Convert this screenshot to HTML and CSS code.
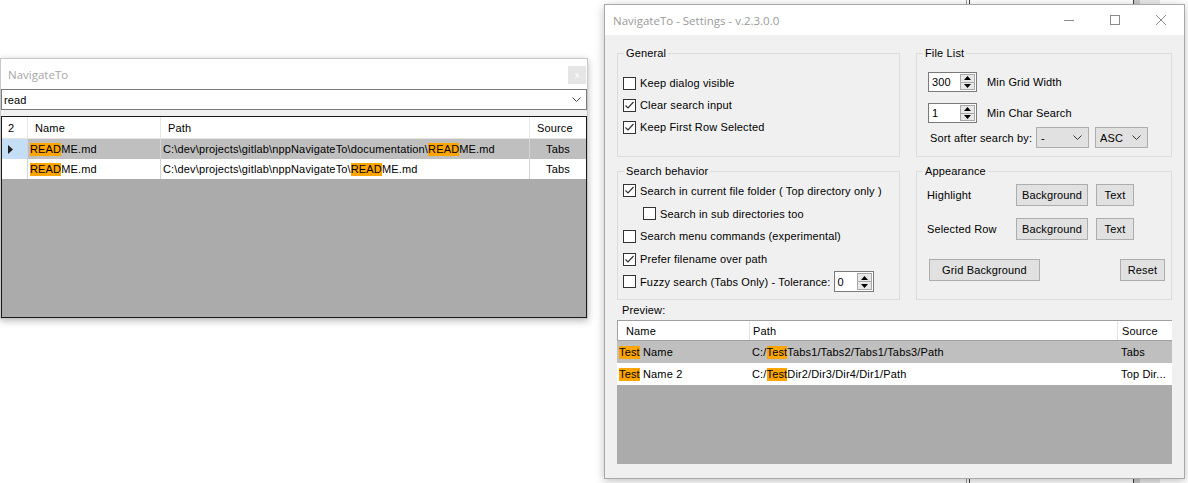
FILE: index.html
```html
<!DOCTYPE html>
<html>
<head>
<meta charset="utf-8">
<link rel="stylesheet" href="styles.css">
</head>
<body>
<div class="bgwin"></div>

<div class="win nav">
  <div class="nav-title">
    <span>NavigateTo</span>
    <span class="nav-close">x</span>
  </div>
  <div class="nav-combo">
    <span>read</span>
    <svg class="chev" width="9" height="5" viewBox="0 0 9 5"><path d="M0.5 0.5L4.5 4.5L8.5 0.5" fill="none" stroke="#444" stroke-width="1"/></svg>
  </div>
  <div class="nav-grid">
    <div class="nrow nhead">
      <div class="nc rh">2</div>
      <div class="nc">Name</div>
      <div class="nc">Path</div>
      <div class="nc">Source</div>
    </div>
    <div class="nrow nsel">
      <div class="nc rh rh-sel"><svg width="5" height="9" viewBox="0 0 5 9"><path d="M0 0L5 4.5L0 9z" fill="#222"/></svg></div>
      <div class="nc"><span class="hl">READ</span>ME.md</div>
      <div class="nc">C:\dev\projects\gitlab\nppNavigateTo\documentation\<span class="hl">READ</span>ME.md</div>
      <div class="nc center">Tabs</div>
    </div>
    <div class="nrow">
      <div class="nc rh"></div>
      <div class="nc"><span class="hl">READ</span>ME.md</div>
      <div class="nc">C:\dev\projects\gitlab\nppNavigateTo\<span class="hl">READ</span>ME.md</div>
      <div class="nc center">Tabs</div>
    </div>
  </div>
</div>

<div class="win settings">
  <div class="s-title">
    <span class="s-title-text">NavigateTo - Settings - v.2.3.0.0</span>
    <div class="caps">
      <span class="cap"><svg width="10" height="1" viewBox="0 0 10 1"><rect width="10" height="1" fill="#8c8c8c"/></svg></span>
      <span class="cap"><svg width="10" height="10" viewBox="0 0 10 10"><rect x="0.5" y="0.5" width="9" height="9" fill="none" stroke="#8c8c8c"/></svg></span>
      <span class="cap"><svg width="10" height="10" viewBox="0 0 10 10"><path d="M0 0L10 10M10 0L0 10" stroke="#8c8c8c" stroke-width="1"/></svg></span>
    </div>
  </div>
  <div class="s-body">
    <div class="groups">
      <fieldset class="grp">
        <legend>General</legend>
        <div class="gbody gb-general">
          <div class="chk-row"><span class="cb"></span><span>Keep dialog visible</span></div>
          <div class="chk-row"><span class="cb"><svg width="11" height="11" viewBox="0 0 11 11"><polyline points="1.5,5.5 4,8 9.5,2" fill="none" stroke="#333" stroke-width="1.2"/></svg></span><span>Clear search input</span></div>
          <div class="chk-row"><span class="cb"><svg width="11" height="11" viewBox="0 0 11 11"><polyline points="1.5,5.5 4,8 9.5,2" fill="none" stroke="#333" stroke-width="1.2"/></svg></span><span>Keep First Row Selected</span></div>
        </div>
      </fieldset>

      <fieldset class="grp">
        <legend>File List</legend>
        <div class="gbody gb-files">
          <div class="fl-row r1">
            <div class="spin w49"><span class="spin-val">300</span><span class="spin-btns"><span class="sb"><svg width="7" height="4" viewBox="0 0 7 4"><path d="M0 4L3.5 0L7 4z" fill="#000"/></svg></span><span class="sb"><svg width="7" height="4" viewBox="0 0 7 4"><path d="M0 0L3.5 4L7 0z" fill="#000"/></svg></span></span></div>
            <span class="fl-label">Min Grid Width</span>
          </div>
          <div class="fl-row r2">
            <div class="spin w49"><span class="spin-val">1</span><span class="spin-btns"><span class="sb"><svg width="7" height="4" viewBox="0 0 7 4"><path d="M0 4L3.5 0L7 4z" fill="#000"/></svg></span><span class="sb"><svg width="7" height="4" viewBox="0 0 7 4"><path d="M0 0L3.5 4L7 0z" fill="#000"/></svg></span></span></div>
            <span class="fl-label">Min Char Search</span>
          </div>
          <div class="sort-row">
            <span class="sort-label">Sort after search by:</span>
            <div class="dd"><span>-</span><svg width="9" height="5" viewBox="0 0 9 5"><path d="M0.5 0.5L4.5 4.5L8.5 0.5" fill="none" stroke="#333"/></svg></div>
            <div class="dd"><span>ASC</span><svg width="9" height="5" viewBox="0 0 9 5"><path d="M0.5 0.5L4.5 4.5L8.5 0.5" fill="none" stroke="#333"/></svg></div>
          </div>
        </div>
      </fieldset>

      <fieldset class="grp">
        <legend>Search behavior</legend>
        <div class="gbody gb-search">
          <div class="chk-row s"><span class="cb"><svg width="11" height="11" viewBox="0 0 11 11"><polyline points="1.5,5.5 4,8 9.5,2" fill="none" stroke="#333" stroke-width="1.2"/></svg></span><span>Search in current file folder ( Top directory only )</span></div>
          <div class="chk-row s sub"><span class="cb"></span><span>Search in sub directories too</span></div>
          <div class="chk-row s"><span class="cb"></span><span>Search menu commands (experimental)</span></div>
          <div class="chk-row s"><span class="cb"><svg width="11" height="11" viewBox="0 0 11 11"><polyline points="1.5,5.5 4,8 9.5,2" fill="none" stroke="#333" stroke-width="1.2"/></svg></span><span>Prefer filename over path</span></div>
          <div class="chk-row s fuzzy"><span class="cb"></span><span>Fuzzy search (Tabs Only) - Tolerance:</span>
            <div class="spin w40"><span class="spin-val">0</span><span class="spin-btns"><span class="sb"><svg width="7" height="4" viewBox="0 0 7 4"><path d="M0 4L3.5 0L7 4z" fill="#000"/></svg></span><span class="sb"><svg width="7" height="4" viewBox="0 0 7 4"><path d="M0 0L3.5 4L7 0z" fill="#000"/></svg></span></span></div>
          </div>
        </div>
      </fieldset>

      <fieldset class="grp">
        <legend>Appearance</legend>
        <div class="gbody gb-appear">
          <div class="ap-row">
            <span class="ap-label">Highlight</span>
            <span class="btn b-bg">Background</span>
            <span class="btn b-tx">Text</span>
          </div>
          <div class="ap-row r2">
            <span class="ap-label">Selected Row</span>
            <span class="btn b-bg">Background</span>
            <span class="btn b-tx">Text</span>
          </div>
          <div class="ap-row r3">
            <span class="btn b-grid">Grid Background</span>
            <span class="btn b-reset">Reset</span>
          </div>
        </div>
      </fieldset>
    </div>

    <div class="preview-label">Preview:</div>
    <div class="pgrid">
      <div class="prow phead">
        <div class="pc ph1">Name</div>
        <div class="pc ph2">Path</div>
        <div class="pc ph3">Source</div>
      </div>
      <div class="prow psel">
        <div class="pc"><span class="hl">Test</span> Name</div>
        <div class="pc">C:/<span class="hl">Test</span>Tabs1/Tabs2/Tabs1/Tabs3/Path</div>
        <div class="pc">Tabs</div>
      </div>
      <div class="prow pwhite">
        <div class="pc"><span class="hl">Test</span> Name 2</div>
        <div class="pc">C:/<span class="hl">Test</span>Dir2/Dir3/Dir4/Dir1/Path</div>
        <div class="pc">Top Dir...</div>
      </div>
    </div>
  </div>
</div>
</body>
</html>
```

FILE: styles.css
```css
* { box-sizing: border-box; }
html, body { margin: 0; padding: 0; }
body {
  width: 1188px;
  height: 483px;
  position: relative;
  overflow: hidden;
  background: #ffffff;
  font-family: "Liberation Sans", Arial, sans-serif;
  font-size: 11px;
  letter-spacing: 0.15px;
  color: #000;
}

/* window partly hidden behind the settings dialog */
.bgwin {
  position: absolute;
  left: 966px;
  top: 0;
  width: 194px;
  height: 483px;
  background: linear-gradient(to right,
    #9a9a9a 0 1px, #fff 1px 3px, #404040 3px 4px, #fff 4px 167px,
    #404040 167px 168px, #c8c8c8 168px 174px, #e9e9e9 174px 194px);
}

.win {
  position: absolute;
  background: #f0f0f0;
}

/* ---------- NavigateTo window ---------- */
.nav {
  left: 0;
  top: 58px;
  width: 588px;
  height: 261px;
  border: 1px solid #c8c8c8;
  box-shadow: 0 2px 7px rgba(0, 0, 0, 0.28);
  display: flex;
  flex-direction: column;
}
.nav-title {
  height: 30px;
  flex: none;
  background: #fff;
  display: flex;
  align-items: center;
  justify-content: space-between;
  padding: 0 1px 0 7px;
  font-family: "Open Sans", "Noto Sans", sans-serif;
  font-size: 11.5px;
  letter-spacing: 0;
  color: #a6a6a6;
}
.nav-close {
  width: 18px;
  height: 18px;
  background: #e5e5e5;
  color: #fff;
  font-family: "Liberation Sans", sans-serif;
  font-size: 9px;
  display: flex;
  align-items: center;
  justify-content: center;
  margin-top: 2px;
}
.nav-combo {
  height: 21px;
  flex: none;
  background: #fff;
  border: 1px solid #7a7a7a;
  display: flex;
  align-items: center;
  justify-content: space-between;
  padding: 0 5px 0 2px;
}
.nav-grid {
  flex: 1;
  margin-top: 6px;
  background: #ababab;
  border: 1px solid #1a1a1a;
  display: flex;
  flex-direction: column;
}
.nrow {
  display: grid;
  grid-template-columns: 26px 133px 369px 1fr;
  height: 20px;
  line-height: 21px;
  background: #fff;
}
.nhead { height: 22px; line-height: 22px; border-bottom: 1px solid #e3e3e3; }
.nsel { background: #bfbfbf; }
.nc {
  display: block;
  padding-left: 2px;
  border-right: 1px solid #d4d4d4;
  white-space: nowrap;
  overflow: hidden;
}
.nc:last-child { border-right: none; }
.nhead .nc { padding-left: 7px; border-right-color: #e6e6e6; }
.nhead .nc.rh { padding-left: 6px; }
.nc.center { text-align: center; padding-left: 0; }
.rh-sel {
  background: #c4dff5;
  display: flex;
  align-items: center;
  padding-left: 6px;
}

.hl { background: #ffa500; line-height: 13px; display: inline-block; }

/* ---------- Settings window ---------- */
.settings {
  left: 604px;
  top: 4px;
  width: 581px;
  height: 475px;
  border: 1px solid #a9a9a9;
  box-shadow: 0 2px 9px rgba(0, 0, 0, 0.25);
}
.s-title {
  height: 30px;
  background: #fff;
  display: flex;
  align-items: center;
  justify-content: space-between;
  padding-left: 8px;
}
.s-title-text {
  font-family: "Open Sans", "Noto Sans", sans-serif;
  font-size: 11.5px;
  letter-spacing: 0;
  color: #9a9a9a;
}
.caps { display: flex; height: 30px; }
.cap {
  width: 46px;
  height: 30px;
  display: flex;
  align-items: center;
  justify-content: center;
}

.s-body { padding: 12px 12px 0 12px; }
.groups {
  display: grid;
  grid-template-columns: 283px 256px;
  grid-template-rows: 110px 135px;
  column-gap: 16px;
  row-gap: 8px;
}
.grp {
  margin: 0;
  padding: 0;
  min-width: 0;
  border: 1px solid #dcdcdc;
}
.grp legend {
  margin-left: 6px;
  padding: 0 2px;
  line-height: 13px;
  font-size: 11px;
}
.gbody { display: flex; flex-direction: column; }
.gb-general { padding: 12px 0 0 5px; }
.gb-search { padding: 1.5px 0 0 5px; }
.gb-files { padding: 12px 0 0 11px; }
.gb-appear { padding: 6px 6px 0 10px; }

.chk-row {
  height: 22px;
  display: flex;
  align-items: center;
  gap: 4px;
  white-space: nowrap;
}
.chk-row.s { height: 22.75px; }
.chk-row.sub { padding-left: 20px; }
.fuzzy .spin { margin-left: -1px; }
.cb {
  width: 13px;
  height: 13px;
  border: 1px solid #333;
  background: #fff;
  display: flex;
  align-items: center;
  justify-content: center;
  flex: none;
}

.spin {
  display: flex;
  height: 20px;
  border: 1px solid #7a7a7a;
  background: #fff;
  flex: none;
}
.w49 { width: 49px; }
.w40 { width: 40px; height: 21px; }
.spin-val { flex: 1; padding-left: 3px; display: flex; align-items: center; }
.spin-btns {
  width: 16px;
  display: flex;
  flex-direction: column;
  padding: 1px 1px 1px 0;
}
.sb {
  flex: 1;
  background: #e8e8e8;
  border: 1px solid #a8a8a8;
  display: flex;
  align-items: center;
  justify-content: center;
}
.sb + .sb { border-top: none; }

.fl-row { display: flex; align-items: center; gap: 10px; }
.fl-row.r1 { margin-bottom: 11px; }
.fl-row.r2 { margin-bottom: 4px; }
.sort-row { display: flex; align-items: center; }
.sort-label { width: 108px; padding-left: 2px; white-space: nowrap; }
.dd {
  width: 53px;
  height: 21px;
  background: #e1e1e1;
  border: 1px solid #adadad;
  display: flex;
  align-items: center;
  justify-content: space-between;
  padding: 0 6px 0 4px;
}
.dd + .dd { margin-left: 6px; }

.ap-row { display: flex; align-items: center; height: 22px; }
.ap-row.r2 { margin-top: 12px; }
.ap-row.r3 { margin-top: 19px; padding-left: 2px; justify-content: space-between; }
.ap-label { width: 89px; white-space: nowrap; }
.btn {
  height: 22px;
  background: #e1e1e1;
  border: 1px solid #adadad;
  display: flex;
  align-items: center;
  justify-content: center;
  white-space: nowrap;
}
.b-bg { width: 72px; }
.b-tx { width: 38px; margin-left: 8px; }
.b-grid { width: 111px; }
.b-reset { width: 45px; }

.preview-label {
  line-height: 13px;
  margin-top: 4px;
  padding-left: 5px;
}
.pgrid {
  margin-top: 3px;
  height: 144px;
  background: #ababab;
  display: flex;
  flex-direction: column;
}
.prow {
  display: grid;
  grid-template-columns: 132px 368px 1fr;
  height: 22px;
  line-height: 22px;
}
.phead {
  height: 21px;
  line-height: 20px;
  background: #fff;
  border-top: 1px solid #a0a0a0;
  border-left: 1px solid #a0a0a0;
  border-bottom: 1px solid #a0a0a0;
}
.psel { background: #bfbfbf; }
.pwhite { background: #fff; }
.pc {
  display: block;
  padding-left: 2px;
  white-space: nowrap;
  overflow: hidden;
}
.prow .pc:nth-child(2) { padding-left: 3px; }
.prow .pc:nth-child(3) { padding-left: 4px; }
.phead .pc { border-right: 1px solid #e3e3e3; }
.phead .pc:last-child { border-right: none; }
.phead .ph1 { padding-left: 8px; }
.phead .ph2 { padding-left: 8px; }
.phead .ph3 { padding-left: 7px; }
```
